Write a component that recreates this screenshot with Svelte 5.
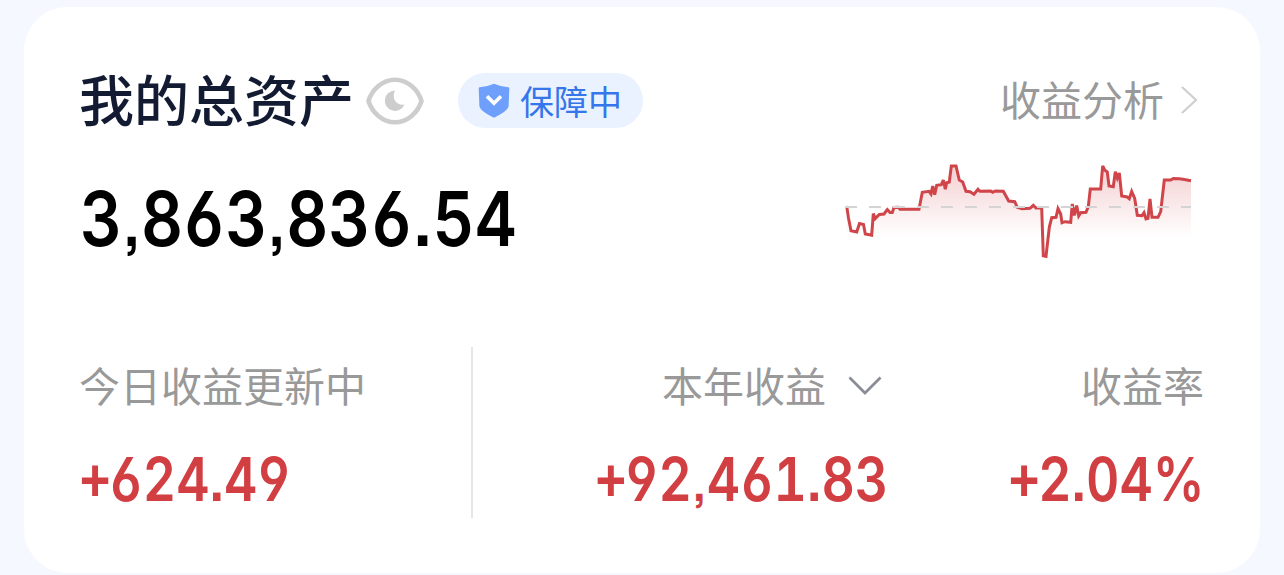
<script>
  const trend = [
    [846.7,206],[848.5,218],[851,230.7],[856.7,232],[859.5,223.5],[863.5,224.5],[865.3,234],[871.7,235.2],
    [873.3,213.5],[875.3,218.5],[879.3,214.5],[884,214],[887.3,209.5],[890,212.5],[892.3,212.5],[894,207.5],
    [898.3,207.3],[900,209.2],[919,209.2],[922.3,192.3],[929,191.3],[931,194],[932.7,186],[934.7,194.7],
    [936.7,185.3],[941.3,184.7],[943.3,180],[945.3,189.3],[946.7,182.7],[949.3,182],[951.3,166],[956,166],
    [959.3,180],[962.7,182],[966,191.3],[970,191.7],[974,194.3],[978,189.3],[980,191.3],[990.7,191],
    [992.7,192.3],[995.3,191],[1003.3,191.3],[1008.7,201],[1014.7,201.7],[1017.3,207.3],[1022,208.7],
    [1030,208.3],[1033.3,205.3],[1036,208],[1041.7,208],[1043.3,255.7],[1046,256.3],[1049.3,227.3],
    [1051.7,217.7],[1056,217.3],[1058,208.7],[1060.7,214],[1062,222.7],[1065,221.7],[1070.7,222.3],
    [1072.3,204],[1074.3,215.5],[1076.7,205.5],[1078.7,216],[1080.7,212.7],[1086,212.3],[1088.3,206.7],
    [1090.3,189],[1100.7,189],[1102.7,165.8],[1104.7,170],[1107.3,172],[1109,186],[1113.3,186.7],
    [1115.3,171.8],[1117.3,178],[1119.3,173],[1121.7,196],[1127.3,197],[1129.3,198.7],[1131.7,191.5],
    [1134.7,198.3],[1137.3,215.3],[1142,215.7],[1144,212.7],[1146,219],[1148,218.4],[1150,199],
    [1152,217.3],[1158,217.3],[1160.7,211.7],[1164.3,180],[1170.7,180],[1173.3,178.5],[1179.3,178.7],
    [1183,179.3],[1191,180.7]
  ];
  const line = trend.map((p) => p.join(',')).join(' ');
  const area = `846.7,240 ${line} 1191,240`;
</script>

<main class="card">
  <header class="head">
    <h1>我的总资产</h1>
    <svg class="eye" viewBox="0 0 58 48" width="58" height="48">
      <path d="M2.5 24C6 12.500 16.500 2.800 29 2.800S52 12.500 55.500 24C52 35.500 41.500 45.200 29 45.200S6 35.500 2.500 24Z" fill="none" stroke="#cdcdcd" stroke-width="4.600" stroke-linejoin="round" />
      <path d="M29 13.500A10.200 10.200 0 1 0 38.500 27.500C31 29 25 22 29 13.500Z" fill="#cdcdcd" />
    </svg>
    <span class="pill">
      <svg viewBox="0 0 32 36" width="32" height="36">
        <path d="M16 .8Q23 4 30.300 4.200Q31.300 4.300 31.300 5.300L30.600 23C30.400 26.500 24 31 16 34.800C8 31 1.600 26.500 1.400 23L.7 5.300Q.7 4.300 1.700 4.200Q9 4 16 .8Z" fill="#6e9ffb" />
        <path d="M9 13.300L16 20.300L23 13.300" fill="none" stroke="#fff" stroke-width="3.600" />
      </svg>
      <span>保障中</span>
    </span>
    <span class="link"><span>收益分析</span>
      <svg viewBox="0 0 20 32" width="20" height="32"><path d="M3 3L17 16L3 29" fill="none" stroke="#cfcfcf" stroke-width="2.200" /></svg>
    </span>
  </header>

  <section class="overview">
    <strong class="num">3<i>,</i>863<i>,</i>836<i class="dot">.</i>54</strong>
    <svg class="chart" viewBox="844 156 350 108" width="350" height="108">
      <defs>
        <linearGradient id="fade" gradientUnits="userSpaceOnUse" x1="0" y1="165" x2="0" y2="238">
          <stop offset="0" stop-color="#d4474d" stop-opacity=".26" />
          <stop offset="1" stop-color="#d4474d" stop-opacity="0" />
        </linearGradient>
      </defs>
      <polygon points={area} fill="url(#fade)" />
      <polyline points={line} fill="none" stroke="#d0454a" stroke-width="3" stroke-linejoin="miter" stroke-miterlimit="3" />
      <path d="M845 207H1191" stroke="#d5d3d3" stroke-width="2" stroke-dasharray="12 12" />
    </svg>
  </section>

  <section class="stats">
    <div class="today">
      <span class="label">今日收益更新中</span>
      <b class="num"><u>+</u>624<i class="dot">.</i>49</b>
    </div>
    <div class="year">
      <span class="label">本年收益
        <svg viewBox="0 0 34 22" width="34" height="22"><path d="M1.500 2.500L17 18L32.500 2.500" fill="none" stroke="#8b8d96" stroke-width="2.800" /></svg>
      </span>
      <b class="num"><u>+</u>92<i>,</i>461<i class="dot">.</i>83</b>
    </div>
    <div class="rate">
      <span class="label">收益率</span>
      <b class="num"><u>+</u>2<i class="dot">.</i>04%</b>
    </div>
  </section>
</main>

<style>
  :global(body) { background: #f5f9ff; }
  .card {
    box-sizing: border-box;
    width: 1236px;
    height: 566px;
    margin: 7px 24px 0;
    padding: 65px 56px 0;
    border-radius: 44px;
    background: #fff;
    font-family: "Noto Sans CJK SC", sans-serif;
    display: flex;
    flex-direction: column;
  }
  :global(#app) { display: flow-root; }
  svg { display: block; flex: none; }
  .head { display: flex; align-items: center; height: 56px; }
  h1 { margin: 0 0 6px -1px; font-size: 55px; line-height: 56px; font-weight: 500; color: #131b33; white-space: nowrap; }
  .eye { margin: 1px 0 0 12px; }
  .pill {
    display: flex;
    align-items: center;
    box-sizing: border-box;
    height: 55px;
    width: 185px;
    margin-left: 34px;
    padding-left: 20px;
    gap: 10px;
    border-radius: 28px;
    background: #e9f2fe;
    color: #3576ea;
    font-size: 34px;
    line-height: 55px;
  }
  .pill svg { margin-top: 2px; }
  .link {
    display: flex;
    align-items: center;
    margin-left: auto;
    margin-right: 5px;
    gap: 15px;
    font-size: 41px;
    line-height: 52px;
    color: #999;
  }
  .link span { margin-bottom: 5px; }
  .overview { display: flex; justify-content: space-between; height: 108px; margin-top: 28px; padding-right: 10px; }
  .num {
    font-family: Inter, sans-serif;
    font-weight: 600;
    font-feature-settings: "cv03", "cv04", "ss07", "tnum";
    white-space: nowrap;
    transform: scaleX(.86);
    transform-origin: left;
  }
  .num i { font-style: normal; font-size: .86em; line-height: 1; margin: 0 .01em; font-feature-settings: "ss07", "tnum" 0; }
  .num .dot { font-size: 1em; margin: 0 -.02em; }
  .num u { text-decoration: none; margin: 0 -.06em 0 -.04em; font-size: 1.04em; line-height: 1; position: relative; top: -2px; }
  strong.num { font-size: 76px; line-height: 124px; color: #000; transform: scaleX(.856); }
  strong.num .dot { margin: 0 -.005em; }
  .stats { display: flex; height: 171px; margin-top: 83px; }
  .stats > div { display: flex; flex-direction: column; }
  .today { width: 391px; border-right: 2px solid #e6e6e6; }
  .year { width: 415px; align-items: flex-end; }
  .rate { flex: 1; align-items: flex-end; }
  .year .num, .rate .num { transform-origin: right; }
  .rate .num { margin-right: -1px; }
  .label { display: flex; align-items: center; gap: 22px; height: 76px; margin-top: -1px; font-size: 41px; line-height: 74px; color: #999; }
  .today .label { margin-left: -1px; }
  .year .label { padding-right: 6px; }
  .year .label svg { margin-top: 4px; }
  b.num { font-size: 60px; line-height: 70px; margin-top: 22px; color: #d23f43; }
</style>
